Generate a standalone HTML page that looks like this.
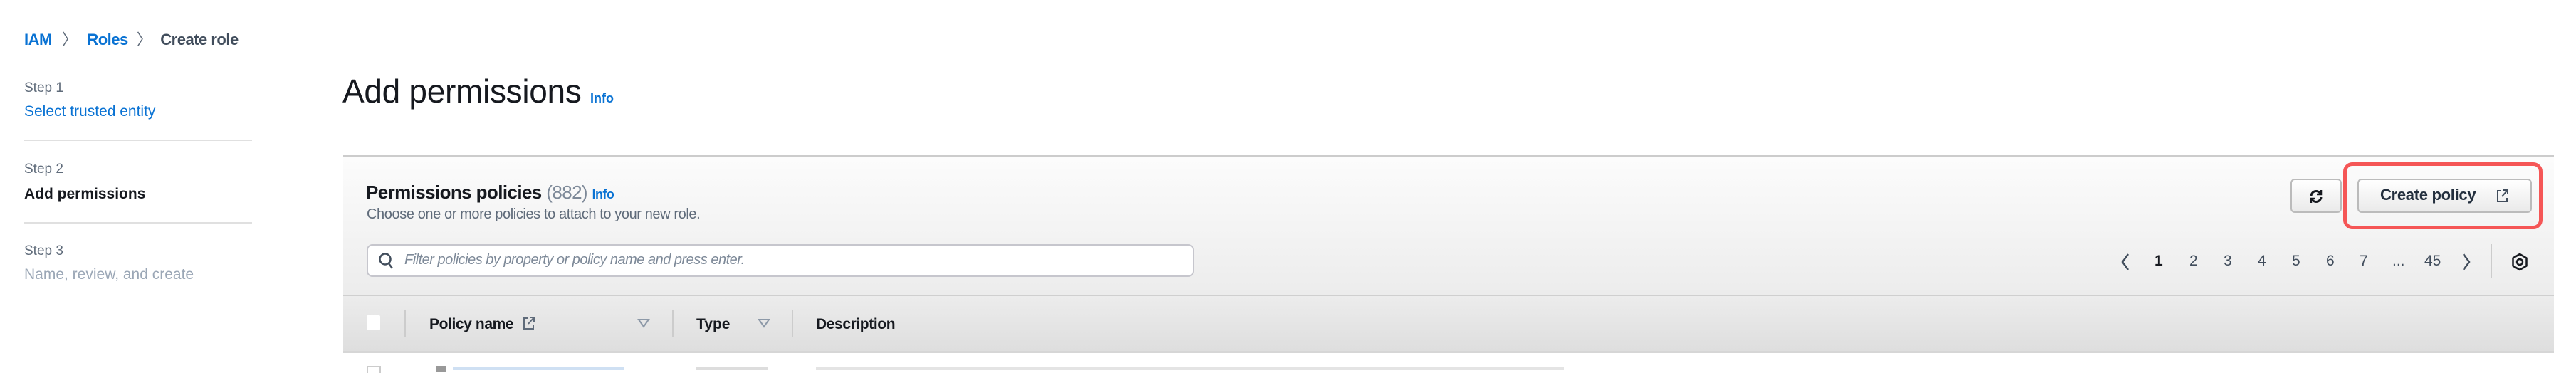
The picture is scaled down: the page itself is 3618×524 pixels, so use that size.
<!DOCTYPE html>
<html><head><meta charset="utf-8"><style>
*{margin:0;padding:0;box-sizing:border-box}
body{width:3618px;height:520px;background:#fff;font-family:"Liberation Sans",Arial,sans-serif;position:relative;overflow:hidden;color:#16191f}
.a{position:absolute;white-space:nowrap}
.blue{color:#0972d3}
.grey{color:#5f6b7a}
.lt{color:#9ba7b6}
</style></head><body>
<div class="a" style="left:34px;top:38px;font-size:22px;font-weight:bold;letter-spacing:-0.5px">
<span class="blue">IAM</span><span style="color:#5f6b7a;margin:0 14px;font-weight:normal">〉</span><span class="blue">Roles</span><span style="color:#5f6b7a;margin:0 12px;font-weight:normal">〉</span><span style="color:#414d5c">Create role</span></div>

<div class="a grey" style="left:34px;top:113px;font-size:19px">Step 1</div>
<div class="a blue" style="left:34px;top:145px;font-size:21px">Select trusted entity</div>
<div class="a" style="left:34px;top:196px;width:320px;height:2px;background:#e0e0e0"></div>
<div class="a grey" style="left:34px;top:227px;font-size:19px">Step 2</div>
<div class="a" style="left:34px;top:261px;font-size:21px;font-weight:bold">Add permissions</div>
<div class="a" style="left:34px;top:312px;width:320px;height:2px;background:#e0e0e0"></div>
<div class="a grey" style="left:34px;top:342px;font-size:19px">Step 3</div>
<div class="a lt" style="left:34px;top:374px;font-size:21px">Name, review, and create</div>

<div class="a" style="left:481px;top:101px;font-size:46px;letter-spacing:-0.3px">Add permissions <span class="blue" style="font-size:18px;font-weight:bold;letter-spacing:0">Info</span></div>

<div class="a" style="left:482px;top:218px;width:3105px;height:197px;border-top:3px solid #ccc;background:linear-gradient(#fcfcfc,#ececec)"></div>
<div class="a" style="left:482px;top:414px;width:3105px;height:82px;border-top:2px solid #cfcfcf;border-bottom:3px solid #d6d6d6;background:linear-gradient(#ececec,#dedede)"></div>

<div class="a" style="left:514px;top:255px;font-size:26px;font-weight:bold;letter-spacing:-0.6px">Permissions policies <span style="font-weight:normal;color:#7d8998">(882)</span> <span class="blue" style="font-size:18px">Info</span></div>
<div class="a grey" style="left:515px;top:290px;font-size:20px;letter-spacing:-0.4px">Choose one or more policies to attach to your new role.</div>

<div class="a" style="left:515px;top:343px;width:1162px;height:46px;border:2px solid #c6c6cd;border-radius:8px;background:#fff"></div>
<svg class="a" style="left:531px;top:354px" width="24" height="26" viewBox="0 0 24 26"><circle cx="10" cy="10" r="7.5" fill="none" stroke="#414d5c" stroke-width="2.5"/><path d="M15 16l5 7" stroke="#414d5c" stroke-width="2.5"/></svg>
<div class="a" style="left:568px;top:354px;font-size:20px;font-style:italic;color:#7d8998;letter-spacing:-0.5px">Filter policies by property or policy name and press enter.</div>

<div class="a" style="left:515px;top:443px;width:19px;height:21px;background:#fff;border-radius:2px"></div>
<div class="a" style="left:568px;top:436px;width:2px;height:38px;background:#ccc"></div>
<div class="a" style="left:944px;top:436px;width:2px;height:38px;background:#ccc"></div>
<div class="a" style="left:1112px;top:436px;width:2px;height:38px;background:#ccc"></div>
<div class="a" style="left:603px;top:444px;font-size:21px;font-weight:bold;letter-spacing:-0.4px">Policy name</div>
<svg class="a" style="left:733px;top:443px" width="20" height="22" viewBox="0 0 20 22"><path d="M8 4H3v15h13v-5M11 3h6v6M17 3l-8 9" fill="none" stroke="#5f6b7a" stroke-width="2"/></svg>
<svg class="a" style="left:895px;top:447px" width="18" height="14"><path d="M2 2h14l-7 10z" fill="none" stroke="#8d99a8" stroke-width="2"/></svg>
<div class="a" style="left:978px;top:444px;font-size:21px;font-weight:bold">Type</div>
<svg class="a" style="left:1064px;top:447px" width="18" height="14"><path d="M2 2h14l-7 10z" fill="none" stroke="#8d99a8" stroke-width="2"/></svg>
<div class="a" style="left:1146px;top:444px;font-size:21px;font-weight:bold;letter-spacing:-0.4px">Description</div>
<div class="a" style="left:515px;top:514px;width:20px;height:10px;border:2px solid #ccc;border-bottom:none"></div>
<div class="a" style="left:612px;top:514px;width:14px;height:8px;background:#999"></div>
<div class="a" style="left:636px;top:516px;width:240px;height:4px;background:#cfe0f3"></div>
<div class="a" style="left:978px;top:516px;width:100px;height:4px;background:#ddd"></div>
<div class="a" style="left:1146px;top:516px;width:1050px;height:4px;background:#e4e4e4"></div>

<div class="a" style="left:3217px;top:251px;width:72px;height:48px;border:2px solid #bbb;border-radius:6px;background:linear-gradient(#fff,#eaeaea)"></div>
<svg class="a" style="left:3242px;top:264px" width="22" height="24" viewBox="0 0 22 24"><path d="M4 11a7 7 0 0 1 13-3M18 13a7 7 0 0 1-13 3" fill="none" stroke="#16191f" stroke-width="3"/><path d="M18 3v6h-6M4 21v-6h6" fill="none" stroke="#16191f" stroke-width="2.5"/></svg>
<div class="a" style="left:3311px;top:251px;width:245px;height:48px;border:2px solid #bbb;border-radius:6px;background:linear-gradient(#fff,#eaeaea)"></div>
<div class="a" style="left:3343px;top:261px;font-size:22px;font-weight:bold;color:#232f3e;letter-spacing:-0.3px">Create policy</div>
<svg class="a" style="left:3504px;top:264px" width="22" height="22" viewBox="0 0 20 22"><path d="M8 4H3v15h13v-5M11 3h6v6M17 3l-8 9" fill="none" stroke="#414d5c" stroke-width="2"/></svg>
<div class="a" style="left:3291px;top:228px;width:280px;height:94px;border:5px solid #f55656;border-radius:13px"></div>

<svg class="a" style="left:2977px;top:355px" width="16" height="26"><path d="M12 2L4 13l8 11" fill="none" stroke="#414d5c" stroke-width="2.5"/></svg>
<div class="a" style="left:3026px;top:355px;font-size:21px;font-weight:bold">1</div>
<div class="a" style="top:355px;left:3075px;font-size:21px;color:#414d5c">2</div>
<div class="a" style="top:355px;left:3123px;font-size:21px;color:#414d5c">3</div>
<div class="a" style="top:355px;left:3171px;font-size:21px;color:#414d5c">4</div>
<div class="a" style="top:355px;left:3219px;font-size:21px;color:#414d5c">5</div>
<div class="a" style="top:355px;left:3267px;font-size:21px;color:#414d5c">6</div>
<div class="a" style="top:355px;left:3314px;font-size:21px;color:#414d5c">7</div>
<div class="a" style="top:355px;left:3360px;font-size:21px;color:#414d5c">...</div>
<div class="a" style="top:355px;left:3405px;font-size:21px;color:#414d5c">45</div>
<svg class="a" style="left:3456px;top:355px" width="16" height="26"><path d="M4 2l8 11-8 11" fill="none" stroke="#414d5c" stroke-width="2.5"/></svg>
<div class="a" style="left:3498px;top:343px;width:2px;height:47px;background:#ccc"></div>
<svg class="a" style="left:3526px;top:354px" width="26" height="28" viewBox="0 0 26 28"><circle cx="13" cy="14" r="4" fill="none" stroke="#16191f" stroke-width="2.5"/><path d="M13 3l9.5 5.5v11L13 25 3.5 19.5v-11z" fill="none" stroke="#16191f" stroke-width="2.5" stroke-linejoin="round"/></svg>
</body></html>
